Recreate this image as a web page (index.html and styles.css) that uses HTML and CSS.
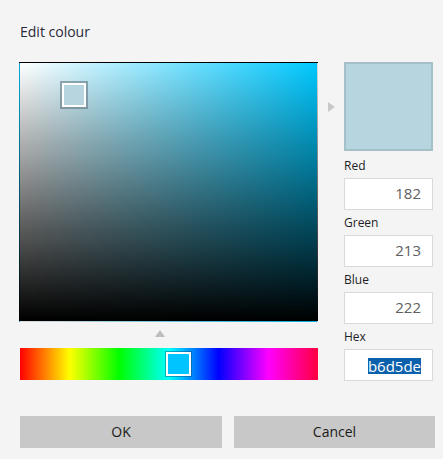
FILE: index.html
```html
<!DOCTYPE html>
<html lang="en">
<head>
<meta charset="utf-8">
<title>Edit colour</title>
<link rel="stylesheet" href="styles.css">
</head>
<body>
<div class="dialog">
  <div class="title">Edit colour</div>
  <div class="main">
    <div class="picker-col">
      <div class="sv-square">
        <div class="sv-thumb"></div>
      </div>
      <div class="hue-marker-row"><span class="tri-up"></span></div>
      <div class="hue-bar">
        <div class="hue-thumb"></div>
      </div>
    </div>
    <div class="arrow-col"><span class="tri-right"></span></div>
    <div class="fields-col">
      <div class="swatch"></div>
      <div class="field-label">Red</div>
      <div class="field-box">182</div>
      <div class="field-label">Green</div>
      <div class="field-box">213</div>
      <div class="field-label">Blue</div>
      <div class="field-box">222</div>
      <div class="field-label">Hex</div>
      <div class="field-box"><span class="selected">b6d5de</span></div>
    </div>
  </div>
  <div class="buttons">
    <div class="btn">OK</div>
    <div class="btn">Cancel</div>
  </div>
</div>
</body>
</html>
```

FILE: styles.css
```css
html, body {
  margin: 0;
  padding: 0;
  background: #f4f4f4;
}

.dialog {
  width: 443px;
  height: 459px;
  box-sizing: border-box;
  padding: 22px 8px 0 19px;
  font-family: "Open Sans", "Noto Sans", sans-serif;
  color: #1e1e1e;
}

.title {
  font-size: 14px;
  line-height: 20px;
  height: 20px;
  color: #2a2a38;
  margin-left: 1px;
  margin-bottom: 20px;
}

.main {
  display: flex;
  align-items: flex-start;
}

.picker-col {
  width: 299px;
  display: flex;
  flex-direction: column;
}

.sv-square {
  position: relative;
  width: 299px;
  height: 260px;
  box-sizing: border-box;
  border: 1px solid rgba(0, 0, 0, 0.14);
  background:
    linear-gradient(to bottom, rgba(0, 0, 0, 0), #000),
    linear-gradient(to right, #fff, #00c8ff);
}

.sv-thumb {
  position: absolute;
  left: 42px;
  top: 20px;
  width: 24px;
  height: 24px;
  box-sizing: border-box;
  border: 2px solid #fff;
  background: #b6d5de;
  box-shadow: 0 0 0 2px rgba(90, 110, 118, 0.55);
}

.hue-marker-row {
  height: 7px;
  margin-top: 8px;
  margin-bottom: 11px;
  display: flex;
  justify-content: flex-start;
  padding-left: 136px;
}

.tri-up {
  width: 0;
  height: 0;
  border-left: 5px solid transparent;
  border-right: 5px solid transparent;
  border-bottom: 7px solid #bdbdbd;
}

.hue-bar {
  position: relative;
  margin-left: 1px;
  width: 298px;
  height: 32px;
  background: linear-gradient(to right,
    #ff0000 0%,
    #ffff00 16.67%,
    #00ff00 33.33%,
    #00ffff 50%,
    #0000ff 66.67%,
    #ff00ff 83.33%,
    #ff0040 100%);
}

.hue-thumb {
  position: absolute;
  left: 146px;
  top: 4px;
  width: 25px;
  height: 24px;
  box-sizing: border-box;
  border: 2px solid #fff;
  background: #00c4ff;
  box-shadow: 0 0 0 1px rgba(0, 80, 110, 0.45);
}

.arrow-col {
  width: 26px;
  height: 89px;
  display: flex;
  align-items: center;
  justify-content: center;
}

.tri-right {
  width: 0;
  height: 0;
  border-top: 5px solid transparent;
  border-bottom: 5px solid transparent;
  border-left: 7px solid #c8c8c8;
}

.fields-col {
  width: 89px;
  display: flex;
  flex-direction: column;
}

.swatch {
  width: 89px;
  height: 89px;
  box-sizing: border-box;
  border: 2px solid #a5c0c8;
  background: #b6d5de;
  margin-bottom: 2px;
}

.field-label {
  height: 25px;
  line-height: 25px;
  font-size: 12px;
  color: #1e1e28;
}

.field-box {
  height: 32px;
  box-sizing: border-box;
  border: 1px solid #dadada;
  background: #fff;
  text-align: right;
  padding-right: 11px;
  font-size: 15px;
  line-height: 28px;
  color: #606060;
}

.selected {
  display: inline-block;
  background: #0c61ad;
  color: #fff;
  line-height: 16px;
  vertical-align: middle;
}

.buttons {
  margin-top: 35px;
  margin-left: 1px;
  display: grid;
  grid-template-columns: 202px 201px;
  column-gap: 12px;
}

.btn {
  height: 32px;
  line-height: 31px;
  background: #c8c8c8;
  text-align: center;
  font-size: 14px;
  color: #1a1a1a;
}
```
